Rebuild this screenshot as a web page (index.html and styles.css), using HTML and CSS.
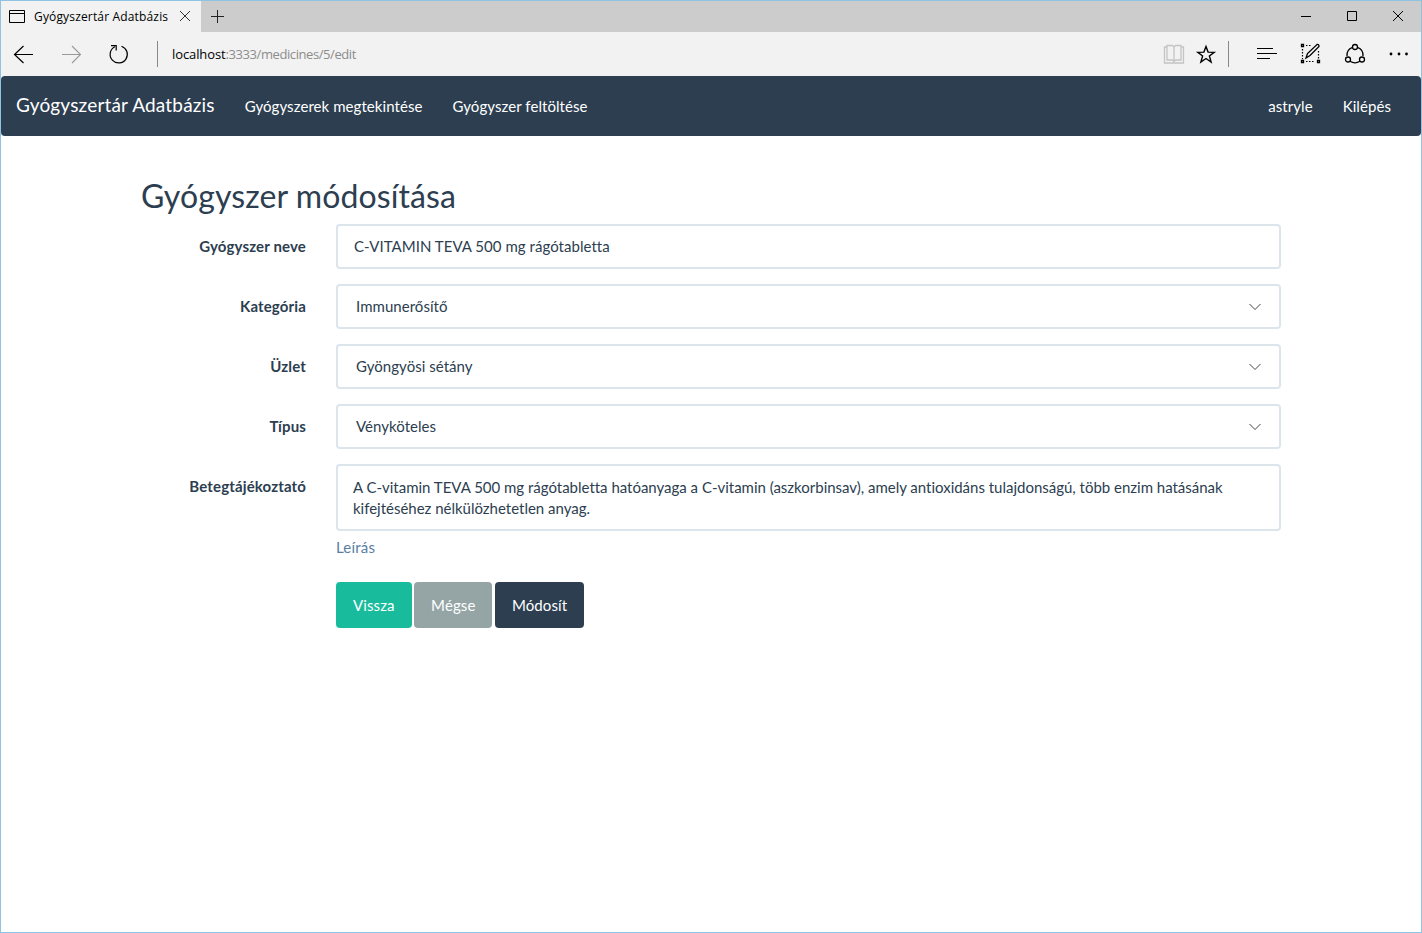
FILE: index.html
```html
<!DOCTYPE html>
<html lang="hu">
<head>
<meta charset="utf-8">
<title>Gyógyszertár Adatbázis</title>
<link rel="stylesheet" href="styles.css">
</head>
<body>
<div class="window">
  <header class="titlebar">
    <div class="tab">
      <svg class="tab-icon" width="16" height="14" viewBox="0 0 16 14"><path d="M.5 .5h15v12H.5zM.5 3.5h15"/></svg>
      <span class="tab-title">Gyógyszertár Adatbázis</span>
      <svg class="tab-close" width="12" height="12" viewBox="0 0 12 12"><path d="M1 1l10 10M11 1L1 11"/></svg>
    </div>
    <svg class="tab-new" width="14" height="14" viewBox="0 0 14 14"><path d="M6.5 0v13M0 6.5h13"/></svg>
    <div class="controls">
      <svg width="46" height="31" viewBox="0 0 46 31"><path d="M18 15.5h10"/></svg>
      <svg width="46" height="31" viewBox="0 0 46 31"><path d="M18.5 10.5h9v9h-9z"/></svg>
      <svg width="46" height="31" viewBox="0 0 46 31"><path d="M18 10l10 10M28 10L18 20"/></svg>
    </div>
  </header>
  <div class="toolbar">
    <svg class="back" width="24" height="44" viewBox="0 0 24 44"><path d="M21 22.5H2.5M11.5 14L2.500 22.500l9 8.500"/></svg>
    <svg class="forward" width="24" height="44" viewBox="0 0 24 44"><path d="M2 22.500h18.500M12 14l8.500 8.500L12 31"/></svg>
    <svg class="reload" width="24" height="44" viewBox="0 0 24 44"><path d="M14.500 14.200A8.600 8.600 0 1 1 7.800 14.700M4 13.600h5.200v5"/></svg>
    <span class="divider"></span>
    <div class="address"><span class="host">localhost</span>:3333/medicines/5/edit</div>
    <div class="actions">
      <svg class="book" width="24" height="44" viewBox="0 0 24 44"><path d="M5 15H2.500v16h19V15H19M12 15.500v14M5 13.500h5.500l1.500 1.500 1.500-1.500H19v14.500h-5.500l-1.500 1.500-1.500-1.500H5z"/></svg>
      <svg class="star" width="24" height="44" viewBox="0 0 24 44"><path d="M12 14.500l2.100 5.600 6.100.2-4.800 3.700 1.700 6-5.100-3.500L6.900 30l1.700-6-4.800-3.700 6.100-.2z"/></svg>
      <span class="divider"></span>
      <svg class="hub" width="24" height="44" viewBox="0 0 24 44"><path d="M2 16.500h16M2 21.500h20M2 26.500h13"/></svg>
      <svg class="note" width="24" height="44" viewBox="0 0 24 44"><path class="dots" d="M8 13.500h5M8 29.500h9M4.500 17v10M20.500 19v8"/><path d="M3.500 12.500h2v2h-2zM3.500 28.500h2v2h-2zM19.500 28.500h2v2h-2zM8 26l1.500-4.500 9.500-9q2-.5 2 2L12 23.500z"/></svg>
      <svg class="share" width="24" height="44" viewBox="0 0 24 44"><path d="M9.500 15.300A8.500 8.500 0 0 0 4 24M14.500 15.300A8.500 8.500 0 0 1 20 24M7 29.300q5 3 10 0"/><circle cx="12" cy="15" r="2.500"/><circle cx="5" cy="27.500" r="2.500"/><circle cx="19" cy="27.500" r="2.500"/></svg>
      <svg class="more" width="24" height="44" viewBox="0 0 24 44"><circle cx="4" cy="22" r="1.400"/><circle cx="12" cy="22" r="1.400"/><circle cx="19.500" cy="22" r="1.400"/></svg>
    </div>
  </div>
  <nav class="navbar">
    <a class="brand">Gyógyszertár Adatbázis</a>
    <a class="nav-link">Gyógyszerek megtekintése</a>
    <a class="nav-link">Gyógyszer feltöltése</a>
    <div class="nav-right">
      <a class="nav-link">astryle</a>
      <a class="nav-link">Kilépés</a>
    </div>
  </nav>
  <main class="container">
    <h2 class="title">Gyógyszer módosítása</h2>
    <form class="form">
      <label class="label">Gyógyszer neve</label>
      <div class="control">C-VITAMIN TEVA 500 mg rágótabletta</div>
      <label class="label">Kategória</label>
      <div class="control select">Immunerősítő<svg width="12" height="8" viewBox="0 0 12 8"><path d="M.5 1L6 6.500 11.500 1"/></svg></div>
      <label class="label">Üzlet</label>
      <div class="control select">Gyöngyösi sétány<svg width="12" height="8" viewBox="0 0 12 8"><path d="M.5 1L6 6.500 11.500 1"/></svg></div>
      <label class="label">Típus</label>
      <div class="control select">Vényköteles<svg width="12" height="8" viewBox="0 0 12 8"><path d="M.5 1L6 6.500 11.500 1"/></svg></div>
      <label class="label">Betegtájékoztató</label>
      <div>
        <div class="control area">A C-vitamin TEVA 500 mg rágótabletta hatóanyaga a C-vitamin (aszkorbinsav), amely antioxidáns tulajdonságú, több enzim hatásának<br>kifejtéséhez nélkülözhetetlen anyag.</div>
        <span class="help">Leírás</span>
        <div class="buttons">
          <a class="btn btn-success">Vissza</a>
          <a class="btn btn-default">Mégse</a>
          <a class="btn btn-primary">Módosít</a>
        </div>
      </div>
    </form>
  </main>
</div>
</body>
</html>
```
FILE: styles.css
```css
* { box-sizing: border-box; }
body {
  margin: 0;
  background: #fff;
  color: #2c3e50;
  font: 15px/21px Lato, sans-serif;
  font-variant-ligatures: none;
}
svg { display: block; flex: none; fill: none; stroke: #000; }
.window { height: 933px; border: 1px solid #8ec3e2; overflow: hidden; }

.titlebar { display: flex; height: 31px; background: #ccc; }
.tab {
  display: flex;
  align-items: center;
  width: 200px;
  padding-left: 8px;
  background: #f2f2f2;
  color: #000;
  font: 12px/16px "Open Sans", sans-serif;
}
.tab-title { width: 135px; margin-left: 9px; white-space: nowrap; letter-spacing: 0.16px; }
.tab-close { margin: -1px 0 0 10px; stroke: #333; }
.tab-new { margin: 9px 0 0 10px; stroke: #222; }
.controls { display: flex; margin-left: auto; }

.toolbar { display: flex; align-items: center; height: 44px; padding: 0 10px 0 11px; background: #f2f2f2; }
.back, .reload { stroke-width: 1.2; }
.forward { margin-left: 24px; stroke: #999; stroke-width: 1.1; }
.reload { margin-left: 23px; }
.divider { width: 1px; height: 26px; margin-left: 26px; background: #888; }
.address {
  margin-left: 14px;
  color: #8c8c8c;
  font: 13px/18px "Open Sans", sans-serif;
  letter-spacing: -0.42px;
  white-space: nowrap;
}
.host { color: #000; letter-spacing: -0.1px; }
.actions { display: flex; align-items: center; margin-left: auto; }
.actions .divider { margin-left: 10px; }
.book { stroke: #c4c4c4; stroke-width: 1.3; }
.star { margin-left: 8px; stroke-width: 1.4; }
.hub { margin-left: 26px; stroke-width: 1.2; }
.note { margin-left: 19px; stroke-width: 1.3; }
.dots { stroke-dasharray: 1.5 1.5; stroke-width: 1.2; }
.share { margin-left: 21px; stroke-width: 1.3; }
.more { margin-left: 20px; fill: #000; stroke: none; }

.navbar {
  display: flex;
  align-items: center;
  height: 60px;
  padding: 0 15px;
  border-radius: 4px;
  background: #2c3e50;
  color: #fff;
}
.brand { margin-right: 15px; padding-bottom: 3px; font-size: 19px; letter-spacing: 0.18px; }
.nav-link { padding: 0 15px; letter-spacing: 0.07px; }
.nav-right { display: flex; margin-left: auto; }

.container { width: 1140px; margin: 0 auto; padding-top: 42px; }
.title { margin: 0 0 10px; font-size: 32px; line-height: 36px; font-weight: 400; letter-spacing: 0.1px; }
.form { display: grid; grid-template-columns: 165px 945px; column-gap: 30px; row-gap: 15px; }
.label { padding-top: 12px; text-align: right; font-weight: 700; letter-spacing: 0.14px; }
.control { height: 45px; padding: 10px 16px; border: 2px solid #dce4ec; border-radius: 4px; letter-spacing: 0.04px; }
.select { display: flex; align-items: center; justify-content: space-between; padding: 0 18px; }
.select svg { stroke: #444; }
.area { height: 67px; padding: 11px 15px; white-space: nowrap; letter-spacing: -0.01px; }
.help { display: block; margin-top: 6px; color: #597ea2; letter-spacing: 0.2px; }
.buttons { display: flex; gap: 2.500px; margin-top: 24px; }
.btn { height: 46px; padding: 13px 17px 12px; border-radius: 4px; color: #fff; letter-spacing: 0.1px; }
.btn-success { background: #18bc9c; }
.btn-default { background: #95a5a6; }
.btn-primary { background: #2c3e50; }
```
